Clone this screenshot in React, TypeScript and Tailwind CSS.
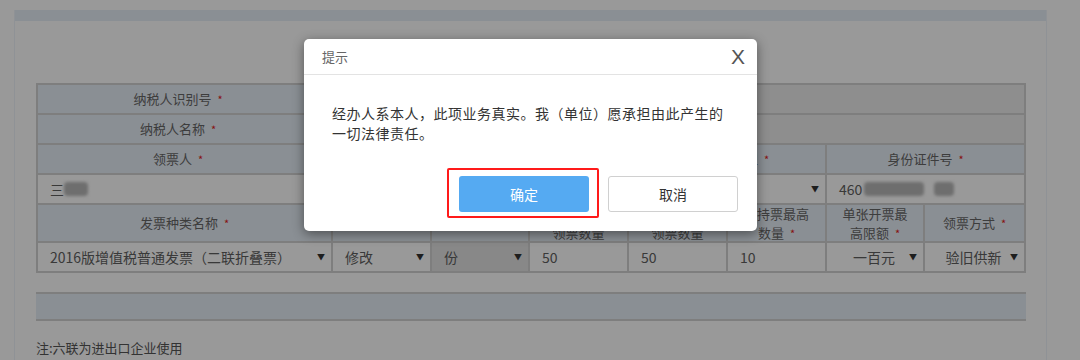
const cjk = "font-['Microsoft_YaHei','Noto_Sans_CJK_SC',sans-serif]";

function Star() {
  return <span className="ml-[6px] text-[11px] text-[#e02020]">*</span>;
}

function Label({ children, star = true, className = '' }: { children: React.ReactNode; star?: boolean; className?: string }) {
  return (
    <div className={`flex items-center justify-center border-r-2 border-b-2 border-[#d3d3d3] bg-[#e6eef7] text-center text-[13px] leading-[19px] text-[#666] ${className}`}>
      <span>
        {children}
        {star && <Star />}
      </span>
    </div>
  );
}

function Cell({ children, className = '' }: { children?: React.ReactNode; className?: string }) {
  return (
    <div className={`flex items-center border-r-2 border-b-2 border-[#d3d3d3] px-[12px] text-[14px] text-[#606060] ${className}`}>
      {children}
    </div>
  );
}

function Select({ value, center = false, className = '' }: { value: string; center?: boolean; className?: string }) {
  return (
    <Cell className={`justify-between pr-[6px] ${className}`}>
      <span className={center ? 'flex-1 text-center' : ''}>{value}</span>
      <span className="text-[8px] text-[#333]">▼</span>
    </Cell>
  );
}

function Blur({ w }: { w: number }) {
  return <span className="inline-block h-[14px] rounded-sm bg-[#b8b8b8] blur-[1.5px]" style={{ width: w }} />;
}

export default function App() {
  return (
    <div className={`relative h-[360px] w-[1080px] overflow-hidden bg-white ${cjk}`}>
      <div className="ml-[14px] mt-[10px] h-[400px] w-[1033px] border-x border-[#eef4fa]">
        <div className="h-[11px] bg-[#e6eef7]" />
        <div className="ml-[21px] w-[990px] pt-[62px]">
          <div className="border-l-2 border-t-2 border-[#d3d3d3]">
            <div className="grid grid-cols-[282px_330px_177px_199px]">
              <Label className="h-[30px]">纳税人识别号</Label>
              <Cell className="col-span-3 h-[30px] bg-[#ededed]" />
              <Label className="h-[30px]">纳税人名称</Label>
              <Cell className="col-span-3 h-[30px] bg-[#ededed]" />
              <Label className="h-[30px]">领票人</Label>
              <Label className="h-[30px]">手机号码</Label>
              <Label className="h-[30px]">证件类型</Label>
              <Label className="h-[30px]">身份证件号</Label>
              <Cell className="h-[30px]">
                <span>三</span>
                <Blur w={24} />
              </Cell>
              <Cell className="h-[30px]" />
              <Select value="居民身份证" className="h-[30px]" />
              <Cell className="h-[30px] gap-[2px]">
                <span>460</span>
                <Blur w={60} />
                <span className="w-[6px]" />
                <Blur w={20} />
              </Cell>
            </div>
            <div className="grid grid-cols-[295px_99px_98px_99px_99px_99px_98px_101px]">
              <Label className="h-[38px]">发票种类名称</Label>
              <Label className="h-[38px]" star={false}>操作类型</Label>
              <Label className="h-[38px]" star={false}>
                {''}
              </Label>
              <Label className="h-[38px]" star={false}>
                每月最高
                <br />
                领票数量
              </Label>
              <Label className="h-[38px]" star={false}>
                每次最高
                <br />
                领票数量
              </Label>
              <Label className="h-[38px]">
                月持票最高
                <br />
                数量
              </Label>
              <Label className="h-[38px]">
                单张开票最
                <br />
                高限额
              </Label>
              <Label className="h-[38px]">领票方式</Label>
              <Select value="2016版增值税普通发票（二联折叠票）" className="h-[30px]" />
              <Select value="修改" className="h-[30px]" />
              <Select value="份" className="h-[30px] bg-[#e3e3e3]" />
              <Cell className="h-[30px]">50</Cell>
              <Cell className="h-[30px]">50</Cell>
              <Cell className="h-[30px]">10</Cell>
              <Select value="一百元" center className="h-[30px]" />
              <Select value="验旧供新" center className="h-[30px]" />
            </div>
          </div>
          <div className="mt-[19px] h-[29px] border-y-2 border-[#d3d3d3] bg-[#e6eef7]" />
          <p className="mt-[17px] text-[13px] text-[#555]">注:六联为进出口企业使用</p>
        </div>
      </div>

      <div className="absolute inset-0 bg-black/40" />

      <div className="absolute left-[304px] top-[39px] h-[192px] w-[453px] rounded-[5px] bg-white shadow-[0_3px_12px_rgba(0,0,0,0.45)]">
        <div className="flex h-[36px] items-center justify-between border-b border-[#e3e3e3] pl-[18px] pr-[12px]">
          <span className="text-[13px] text-[#666]">提示</span>
          <span className="font-['Liberation_Sans',sans-serif] text-[21px] leading-none text-[#555]">X</span>
        </div>
        <p className="mt-[28px] w-[428px] pl-[28px] text-[14px] leading-[20px] tracking-[0.5px] text-[#333]">
          经办人系本人，此项业务真实。我（单位）愿承担由此产生的一切法律责任。
        </p>
        <div className="absolute bottom-[19px] right-[19px] flex gap-[19px]">
          <div className="relative">
            <span className="absolute -bottom-[6px] -left-[12px] -right-[10px] -top-[8px] rounded-[2px] border-2 border-[#ff1a1a]" />
            <button className="h-[36px] w-[130px] rounded-[3px] bg-[#55aaf2] text-[14px] text-white">确定</button>
          </div>
          <button className="h-[36px] w-[130px] rounded-[3px] border border-[#d0d0d0] bg-white text-[14px] text-[#333]">取消</button>
        </div>
      </div>
    </div>
  );
}
